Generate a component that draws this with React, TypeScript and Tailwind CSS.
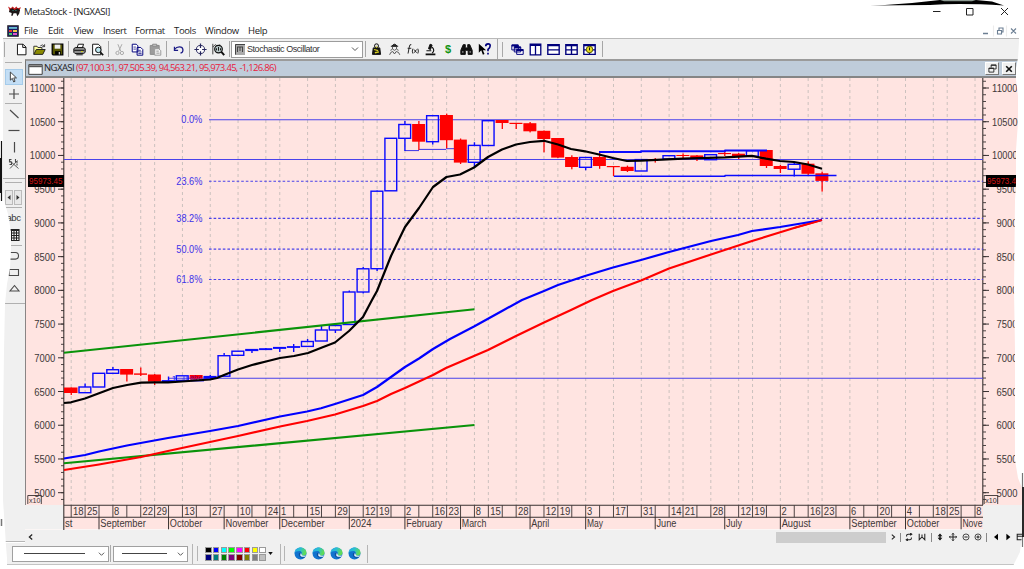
import React from "react";

const X = (i: number) => 71.2 + 13.905 * i;
const PRICE_TOP = 88;
const Y = (v: number) => PRICE_TOP + (11000 - v) * 0.06745;

// [week, colour, body top, body bottom, wick top, wick bottom]
type Candle = [number, "r" | "b", number, number, number, number];
const candles: Candle[] = [
  [0, "r", 387.5, 393, 387.5, 395], [1, "b", 387, 392.7, 383.5, 392.7], [2, "b", 373.3, 387, 373, 387],
  [3, "b", 369.7, 373.3, 367, 373], [4, "r", 369, 374.6, 369, 381.5], [5, "r", 373.4, 374.8, 367.5, 376],
  [6, "r", 374.5, 381.6, 374, 385], [7, "b", 380.8, 381.4, 376.5, 381], [8, "b", 375.8, 380.4, 375.5, 380],
  [9, "r", 375, 378.5, 375, 379], [10, "b", 376.6, 378, 375, 378], [11, "b", 355.7, 376.2, 353, 376],
  [12, "b", 351.2, 355.3, 351, 355], [13, "b", 349.6, 350.4, 349, 353], [14, "b", 348.9, 349.4, 348, 350],
  [15, "b", 347.6, 348.2, 347, 352], [16, "b", 346.8, 347.2, 344, 352], [17, "b", 341.5, 346.4, 339, 346],
  [18, "b", 330, 341, 326, 341], [19, "b", 325.5, 330, 323, 333], [20, "b", 292, 324.5, 290.5, 325],
  [21, "b", 268.8, 292, 267, 293.5], [22, "b", 191.2, 268.7, 190.5, 271], [23, "b", 138.3, 190.8, 138, 191],
  [24, "b", 124.5, 138.3, 121, 151], [25, "r", 124, 141.7, 121, 150], [26, "b", 115.7, 141.7, 115, 144.5],
  [27, "r", 115, 140.2, 113.6, 148.3], [28, "r", 139.6, 162.6, 138.5, 164], [29, "b", 145.4, 162.3, 142.3, 167],
  [30, "b", 120.7, 145.5, 120.5, 145.5], [31, "r", 120, 123, 120, 129], [32, "r", 122.8, 124, 123, 129],
  [33, "r", 123.2, 131.3, 122, 132.4], [34, "r", 130.8, 139, 130.5, 152.3], [35, "r", 138, 157.6, 138, 158],
  [36, "r", 157, 167, 155.3, 169.3], [37, "b", 157.5, 167.3, 157, 170.2], [38, "r", 157, 166, 151.8, 168.8],
  [39, "r", 166, 167.2, 166, 176], [40, "r", 166.8, 171, 165.6, 172], [41, "b", 159.6, 171, 159, 171],
  [42, "r", 159, 160, 158, 162.6], [43, "b", 155.7, 159, 155, 159], [44, "r", 155, 156, 153.4, 158],
  [45, "r", 155.4, 158.7, 155, 161], [46, "b", 154.7, 159.7, 154, 160], [47, "r", 153, 154.1, 151.5, 156],
  [48, "r", 153.7, 156.7, 153, 159], [49, "b", 150.7, 156.3, 150, 157], [50, "r", 150, 166, 150, 168],
  [51, "r", 166, 169, 165, 173], [52, "b", 164.3, 169.2, 163, 176.5], [53, "r", 163.7, 173.8, 161.3, 175],
  [54, "r", 173.3, 180.9, 171.6, 191.6],
];

const days: [number, string][] = [
  [0, "18"], [1, "25"], [3, "8"], [5, "22"], [6, "29"], [8, "13"], [10, "27"], [12, "10"], [14, "24"], [15, "1"],
  [17, "15"], [19, "29"], [21, "12"], [22, "19"], [24, "2"], [26, "16"], [27, "23"], [29, "8"], [30, "15"],
  [32, "28"], [34, "12"], [35, "19"], [37, "3"], [39, "17"], [41, "31"], [43, "14"], [44, "21"], [46, "28"],
  [48, "12"], [49, "19"], [51, "2"], [53, "16"], [54, "23"], [56, "6"], [58, "20"], [60, "4"], [62, "18"],
  [63, "25"], [65, "8"],
];
const months: [number, string, number][] = [
  [2, "September", 45.5], [7, "October", 32.5], [11, "November", 43], [15, "December", 43.5], [20, "2024", 21],
  [24, "February", 36], [28, "March", 24.5], [33, "April", 18], [37, "May", 16], [42, "June", 20],
  [47, "July", 16], [51, "August", 29], [56, "September", 45.5], [60, "October", 32.5], [64, "Nove", 20],
];

const BLACK_MA =
  "64,403 71,402.3 85,398.5 99,393.3 113,388 127,385 141,382.7 155,382.4 168,382.4 182,381.5 196,380.5 210,379.5 217,378 224,375 238,369.5 252,365 266,361.5 280,358 294,356 308,353 322,347.5 335,342.5 349,331 363,317 372,300 377,291 391,256 405,227 419,208 433,187 446.5,177 460,174.5 474,167.5 488,157 502,149.5 516,144.5 530,142 544,140.8 558,144.5 571,149 585,151.3 599,154.5 613,158 627,161 641,160.7 683,158.7 725,157.3 752,155.8 766,158.7 780,161 794,162 808,164.5 822,168.7";
const BLUE_MA =
  "64,458.5 85,455 99,451.5 127,445.5 168,438 210,431 238,426 280,416.5 307,411.5 321,408.3 335,404 363,395 377,387 391,377 405,367 419,358.5 433,349 450,339 474,326.5 502,311 522,300 544,291 558,285 585,276 613,267.5 641,260 669,252 711,241 738,235 752,231 780,227 822,220";
const RED_MA =
  "64,470 99,464.5 141,457 168,451 210,442 238,436 280,426.5 307,421 335,414.5 363,406 377,401 391,394 405,388 419,381.5 433,375 446,368 460,362 488,350 516,336 544,322.5 571,310 592,300 613,291 641,280.5 669,268.5 711,254.5 752,241 794,228 822,220";

const minorTicks: number[] = [];
for (let v = 4900; v <= 11100; v += 100) minorTicks.push(v);
const majors = [11000, 10500, 10000, 9500, 9000, 8500, 8000, 7500, 7000, 6500, 6000, 5500, 5000];
const fibs: [string, number][] = [["0.0%", 119.8], ["23.6%", 181.3], ["38.2%", 218.4], ["50.0%", 249.1], ["61.8%", 279.5]];

interface LabelProps {
  x: number;
  y: number;
  w: number;
  size?: number;
  fill?: string;
  children: React.ReactNode;
}

function Label({ x, y, w, size = 10, fill, children }: LabelProps) {
  return (
    <text x={x} y={y} textLength={w} lengthAdjust="spacingAndGlyphs" fontSize={size} fill={fill}>{children}</text>
  );
}

function PriceChart() {
  const weeks = Array.from({ length: 66 }, (_, i) => i);
  return (
    <svg viewBox="25 78 999 452" className="block h-[452px] w-[999px] shrink-0" fontFamily="'Liberation Sans', Arial, sans-serif">
      <rect x="25" y="78" width="999" height="452" fill="#ffe4e1" />
      <rect x="25" y="505" width="39" height="25" fill="#f0f0f0" />
      <rect x="983" y="505" width="41" height="25" fill="#f0f0f0" />
      <rect x="25" y="529" width="958" height="1" fill="#fbf6f5" />
      <path d="M25.5 78V505" stroke="#8a8585" />
      {days.map(([i]) => (
        <path key={i} d={`M${X(i)} 78V505`} stroke="#cbc1be" strokeWidth="1" strokeDasharray="3 3" />
      ))}
      <path d="M63.8 78V530M982.8 78V505M64 505.3H983M64 517.3H983" stroke="#3a3232" strokeWidth="1.1" />
      {minorTicks.map((v) => (
        <path key={v} d={`M61 ${Y(v)}h3M983 ${Y(v)}h3`} stroke="#3a3232" strokeWidth="0.9" />
      ))}
      {majors.map((v) => {
        const w = v >= 10000 ? 25.5 : 21;
        return (
          <g key={v} fill="#403838">
            <path d={`M58 ${Y(v)}h6M983 ${Y(v)}h6`} stroke="#3a3232" />
            <Label x={55.3 - w} y={Y(v) + 4} w={w}>{v}</Label>
            <Label x={1017.6 - w} y={Y(v) + 4} w={w}>{v}</Label>
          </g>
        );
      })}
      <rect x="28" y="175" width="36" height="12" fill="#000" />
      <Label x={29} y={184.3} w={33.5} size={9.5} fill="#d01515">95973.45</Label>
      <rect x="986" y="175" width="38" height="12" fill="#000" />
      <Label x={987} y={184.3} w={33.5} size={9.5} fill="#d01515">95973.45</Label>
      <path d="M27.8 504V495.5H41.3V504M984.2 504V495.5H997.7V504" stroke="#3a3232" fill="none" strokeWidth="0.9" />
      <g fill="#403838">
        <Label x={29} y={503} w={11.5} size={8}>x10</Label>
        <Label x={985.3} y={503} w={11.5} size={8}>x10</Label>
      </g>

      {weeks.map((i) => (
        <path key={i} d={`M${X(i)} 505.3v12`} stroke="#3a3232" strokeWidth="0.9" />
      ))}
      <g fill="#403838">
        {days.map(([i, d]) => (
          <Label key={i} x={X(i) + (d.length > 1 ? 1.8 : 1.2)} y={514.8} w={d.length > 1 ? 10.6 : 5.2}>{d}</Label>
        ))}
        <Label x={65} y={526.8} w={7.5}>st</Label>
        {months.map(([i, m, w]) => (
          <g key={i}>
            <path d={`M${X(i)} 517v12.3`} stroke="#3a3232" />
            <Label x={X(i) + 1.3} y={526.8} w={w}>{m}</Label>
          </g>
        ))}
      </g>

      <g stroke="#4a42ea" strokeWidth="1.1" fill="none">
        <path d="M209 119.8H983M64 159.5H983M168 378.3H983" />
        {fibs.slice(1).map(([l, y]) => (
          <path key={l} d={`M209 ${y}H983`} strokeDasharray="2.6 2" />
        ))}
      </g>
      <g fill="#3c32e8">
        {fibs.map(([l, y]) => {
          const w = l.length > 4 ? 26 : 21;
          return <Label key={l} x={202.3 - w} y={y + 3.6} w={w}>{l}</Label>;
        })}
      </g>

      <path d="M405 150.6H419M419 149.4H446M446 148.7H460" stroke="#3a32e8" />
      {candles.map(([i, c, t, b, wt, wb]) => {
        const cx = X(i);
        const left = i === 0 ? 64 : cx - 6.7;
        return c === "r" ? (
          <g key={i} fill="#ff0000">
            <rect x={cx - 0.6} y={wt} width="1.3" height={wb - wt} />
            <rect x={left} y={t} width={cx + 6.3 - left} height={b - t} />
          </g>
        ) : (
          <g key={i} stroke="#0a0aff" strokeWidth="1.4" fill="none">
            <path d={`M${cx} ${wt}V${t}M${cx} ${b}V${wb}`} />
            <rect x={cx - 6.1} y={t} width="11.8" height={b - t} />
          </g>
        );
      })}
      <g fontWeight="bold">
        <Label x={172} y={380.5} w={4} size={7} fill="#3030ff">1</Label>
        <Label x={190} y={379.5} w={12} size={7} fill="#a00060">abc</Label>
        <path d="M184 375.5v5M187 375.5v5M191 381H204" stroke="#3030ff" strokeWidth="0.9" />
      </g>
      <g fill="none" strokeLinejoin="round">
        <path d="M64 352.8L474.5 309.3M64 463.3L474.5 425" stroke="#0a930a" strokeWidth="2.1" />
        <polyline points={RED_MA} stroke="#ff0000" strokeWidth="2.2" />
        <polyline points={BLUE_MA} stroke="#0000ff" strokeWidth="2.2" />
        <path d="M794 228L822 220" stroke="#ff0000" strokeWidth="1.7" />
        <path d="M599 152H641V151.2H725V150.4H767" stroke="#0a0aff" strokeWidth="2" />
        <path d="M614 176.3H725V175.5H836.5" stroke="#0a0aff" strokeWidth="1.5" />
        <polyline points={BLACK_MA} stroke="#000" strokeWidth="2.2" />
      </g>
    </svg>
  );
}

function Icon({ children, cls = "w-[18px]" }: { children: React.ReactNode; cls?: string }) {
  return (
    <div className={`flex h-full shrink-0 items-center justify-center ${cls}`}>
      <svg viewBox="0 0 16 16" className="h-[13px] w-[13px]" fill="none" stroke="#111" strokeWidth="1.2">{children}</svg>
    </div>
  );
}

function Sep({ cls = "w-1" }: { cls?: string }) {
  return (
    <div className={`flex h-full shrink-0 justify-center py-[2px] ${cls}`}>
      <div className="w-px bg-[#a6a6a6]" />
    </div>
  );
}

const NAVY = "#00007c";

function MainToolbar() {
  return (
    <div className="flex h-[21px] shrink-0 items-center border-t border-[#b9b9b9] bg-[#f0f0f0] pl-[4px]">
      <div className="mr-[7px] h-[15px] w-px bg-[#a8a8a8]" />
      <Icon><path d="M3 1.500h7l3.500 3.500V14.500H3zM9.500 1.500v4h4" fill="#fff" /></Icon>
      <Icon>
        <path d="M1 14V4h4l1 1.500h5V8" fill="#ffff9a" stroke="#333" />
        <path d="M1 14L4 8H15L12 14Z" fill="#8a8a00" stroke="#222" />
        <path d="M9 3.500q3-2.500 5 .5M14.300 1.500v3h-3" strokeWidth="0.900" />
      </Icon>
      <Icon>
        <path d="M1.500 1.500h13v13h-12l-1-1z" fill="#555500" stroke="#000" strokeWidth="1.600" />
        <path d="M4.500 2h7v5h-7z" fill="#f0f0f0" stroke="none" />
        <path d="M5 10h7v4.500H5z" fill="#000" stroke="none" />
        <path d="M9.500 11h1.500v3h-1.500z" fill="#ddd" stroke="none" />
      </Icon>
      <Sep />
      <Icon>
        <path d="M5 6L6.500 1.500H13L11.500 6" fill="#fff" />
        <path d="M1 7l2-1.500h10L15 7v4.500l-2 1.500H2.500L1 11.500z" fill="#8e8e8e" stroke="#111" />
        <path d="M1.500 9H14M4 14.500h8" /><path d="M10 10.500h2" stroke="#e0e000" />
      </Icon>
      <Icon>
        <path d="M2 1.500h7l3 3v10H2z" fill="#fff" />
        <circle cx="9" cy="8.500" r="3.400" fill="#bde6ee" /><path d="M11.500 11.500L15 15" strokeWidth="2" />
      </Icon>
      <Sep />
      <Icon><g stroke="#a9a9a9"><path d="M6 1.500L9.500 10M11 1.500L7 10" /><circle cx="5.500" cy="12.300" r="2" /><circle cx="11" cy="12.300" r="2" /></g></Icon>
      <Icon>
        <g stroke={NAVY} fill="#fff"><path d="M1.500 1.500h5l2 2V11h-7zM7.500 5.500h4.500l2.500 2.500v7h-7z" /><path d="M3 5h3M3 7.500h3M9 9h3M9 11h4M9 13h4" strokeWidth="0.900" /></g>
      </Icon>
      <Icon>
        <path d="M1.500 3h11v11h-11z" fill="#9c9c9c" stroke="#8a8a8a" /><path d="M4.500 1.500h5V4h-5z" fill="#ccc" stroke="#8a8a8a" />
        <path d="M7 7h5l2.500 2.500V15H7zM9 10h3M9 12.500h4" fill="#f4f4f4" stroke="#999" />
      </Icon>
      <Sep />
      <Icon cls="w-5"><path d="M3 8C6 4 13 3.500 13.500 8.500C13.500 11 12 12 10.500 12.500M3 4.500V9h4.500" stroke="#1b1b86" strokeWidth="1.500" /></Icon>
      <Sep cls="w-[3px]" />
      <Icon><g stroke="#26265e"><circle cx="8" cy="8" r="5" fill="#fff" /><path d="M8 0.500V6M8 10v5.500M0.500 8H6M10 8h5.500" strokeWidth="1.500" /></g></Icon>
      <Icon>
        <path d="M1 14V1M1 5l3-3 3 2 3-2" stroke="#444" /><circle cx="8" cy="7.500" r="4.700" fill="#b8c8c8" strokeWidth="1.500" />
        <path d="M5.500 9V6.500M8 9.500V5M10.500 9V6.500" /><path d="M11.500 11L15 15" strokeWidth="2.400" />
      </Icon>
      <Sep />
      <div className="flex h-[17px] w-[132px] shrink-0 items-center border border-[#9c9c9c] bg-white pl-[3px] pr-[3px]">
        <svg viewBox="0 0 10 11" className="h-[11px] w-[10px] shrink-0"><rect width="10" height="11" fill="#aaa" /><path d="M.5 10.500V.5H10M2 3h6M2.500 3v5M5 3v4M7.500 3v5" stroke="#444" fill="none" /></svg>
        <span className="ml-[2px] flex-1 whitespace-nowrap font-['Liberation_Sans',Arial,sans-serif] text-[9px] leading-none tracking-[-0.440px] text-[#333]">Stochastic Oscillator</span>
        <svg viewBox="0 0 8 6" className="h-[6px] w-[8px]"><path d="M1 1.500L4 4.500 7 1.500" fill="none" stroke="#555" /></svg>
      </div>
      <Sep />
      <Icon>
        <circle cx="8" cy="3.500" r="2.500" fill="#ddd" /><path d="M4 6h8l1 8H3z" fill="#151515" /><path d="M5 8l5 1.500M6 12l5-1M7 5h2" stroke="#d8d020" strokeWidth="1.600" />
      </Icon>
      <Icon>
        <path d="M5 3.500q3-4 6 0zM3.500 4H12.500" fill="#333" /><path d="M5.500 5v2.500q2.500 3 5 0V5M2 14.500q1-4 4-4l2 3 2-3q3.500 0 4.500 4M3 9l2-1M13 9l-2-1" stroke="#555" />
      </Icon>
      <Icon><path d="M6.500 2Q4.500 1 4 5L2.500 13M2 6.500h4.500M8.500 7q-1.500 3 0 6M14.500 7q1.500 3 0 6M10 8l3 4M13 8l-3 4" stroke="#222" /></Icon>
      <Icon><path d="M7.500 1.500L10 2.500 8 8 5.500 7z" fill="#111" /><path d="M10 5q4 4 0 7.500M3 9.500h6" strokeWidth="1.400" /><path d="M2 14h12" strokeWidth="2.200" /></Icon>
      <div className="flex w-[18px] shrink-0 justify-center font-['Liberation_Sans',Arial,sans-serif] text-[11px] font-bold leading-none text-[#129412]">$</div>
      <Icon><path d="M4 2h2.500v4h3V2H12l3 7v5h-5V9H6.500v5H1V9z" fill="#111" /><path d="M3.500 10v2M12.500 10v2" stroke="#bbb" /></Icon>
      <Icon><path d="M1 1v11l3-3 2 5.500 2-1-2-4.500h4z" fill="#000" stroke="none" /><path d="M9.500 4q0-3 3-3 2.500 0 2.500 2.500Q15 6 12.300 8v2M12.300 12v2" stroke={NAVY} strokeWidth="2" /></Icon>
      <div className="ml-[4px] h-full w-px bg-[#a8a8a8]" />
      <div className="ml-[4px] mr-[5px] h-[15px] w-px bg-[#a8a8a8]" />
      <Icon><g stroke={NAVY} fill="#fff"><path d="M1 2.500h8v6H1zM4 5h8v6H4zM7 8h8v6H7z" /><path d="M1 3h8M4 5.500h8M7 8.500h8" strokeWidth="2.500" /></g></Icon>
      <Icon><path d="M1.500 1.500h13v13h-13zM8 2v12M1.500 3h13" stroke={NAVY} strokeWidth="1.600" fill="#fff" /></Icon>
      <Icon><path d="M1 2h14v12H1zM1 8.500h14M1 3h14" stroke={NAVY} strokeWidth="1.700" fill="#fff" /></Icon>
      <Icon><path d="M1 2h14v12H1zM1 8.500h14M1 3h14M8 2v12" stroke={NAVY} strokeWidth="1.700" fill="#fff" /></Icon>
      <Icon><path d="M1 2h14v12H1zM1 8.500h14M1 3h14M8 2v12" stroke={NAVY} strokeWidth="1.700" fill="#fff" /><circle cx="8" cy="8" r="4" fill="#e6dc20" stroke="#555500" /><path d="M8 5.500V9" /></Icon>
      <Sep cls="w-2" />
    </div>
  );
}

function Side({ children, cls }: { children: React.ReactNode; cls: string }) {
  return (
    <div className={`flex w-full shrink-0 items-center justify-center ${cls}`}>
      <svg viewBox="0 0 14 14" className="h-[14px] w-[14px]" fill="none" stroke="#4a4a4a" strokeWidth="1.100">{children}</svg>
    </div>
  );
}

function SideRule() {
  return <div className="h-px w-[17px] shrink-0 bg-[#b0b0b0]" />;
}

function SideToolbar() {
  return (
    <div className="flex h-[483px] w-[25px] shrink-0 flex-col items-center border-b border-[#b5b5b5] bg-[#f0f0f0] pl-[2px] pt-[3px]">
      <SideRule />
      <div className="mt-[6px] flex h-[16px] w-[18px] shrink-0 items-center justify-center border border-[#a5cbea] bg-[#c3def5]">
        <svg viewBox="0 0 10 13" className="h-[12px] w-[9px]"><path d="M1.500 1v9l2.200-2 1.500 4 1.500-.7L5.300 7.500h3z" fill="#fff" stroke="#333" /></svg>
      </div>
      <Side cls="h-[18px]"><path d="M7 2v10M2 7h10" strokeWidth="1.200" /></Side>
      <SideRule />
      <Side cls="h-[20px]"><path d="M3 3l8.500 8" /></Side>
      <Side cls="h-[14px]"><path d="M1.500 6.500h11" strokeWidth="1.200" /></Side>
      <Side cls="h-[17px]"><path d="M7.500 2v10.500" strokeWidth="1.200" /></Side>
      <Side cls="h-[18px]"><path d="M2.500 3.500l9 8M3 11.500l7.500-8" strokeWidth="0.900" /><path d="M4.500 2.500H2.500V5h2v2.500h-2M8.500 2v3h2.500M10 6.500v2" strokeWidth="1.100" /></Side>
      <div className="mt-[5px] h-px w-full shrink-0 bg-[#b0b0b0]" />
      <div className="mt-[3px] h-px w-[17px] shrink-0 bg-[#b0b0b0]" />
      <div className="mt-[7px] flex h-[15px] w-[17px] shrink-0 gap-px">
        <div className="flex flex-1 items-center justify-center border border-[#bbb] bg-[#e8e8e8]"><svg viewBox="0 0 4 5" className="h-[5px] w-[4px]"><path d="M3.500 0L0.500 2.500 3.500 5z" fill="#333" /></svg></div>
        <div className="flex flex-1 items-center justify-center border border-[#bbb] bg-[#e8e8e8]"><svg viewBox="0 0 4 5" className="h-[5px] w-[4px]"><path d="M.5 0L3.500 2.500 .5 5z" fill="#333" /></svg></div>
      </div>
      <div className="mt-[2px] h-px w-[17px] shrink-0 bg-[#b0b0b0]" />
      <div className="flex h-[20px] shrink-0 items-center font-['Liberation_Sans',Arial,sans-serif] text-[9.500px] leading-none tracking-[-0.500px] text-[#333]">abc</div>
      <Side cls="h-[14px]"><path d="M2 1.500h10v11H2z" fill="#fff" stroke="#222" /><path d="M2 2.500h10M2 5h10M2 7.500h10M2 10h10M4.500 2v11M7 2v11M9.500 2v11" stroke="#222" /></Side>
      <div className="mt-[3px] h-px w-[17px] shrink-0 bg-[#b0b0b0]" />
      <Side cls="h-[20px]"><path d="M3 3.500h5.500q3 0 3 3.300t-3 3.300H3" /></Side>
      <Side cls="h-[14px]"><path d="M2 3.500h9.500v6H2z" /></Side>
      <Side cls="h-[18px]"><path d="M7.500 3.500l4.500 5.500H3z" /></Side>
      <div className="mt-[5px] h-px w-full shrink-0 bg-[#b0b0b0]" />
    </div>
  );
}

function Tiny({ children, cls }: { children: React.ReactNode; cls: string }) {
  return (
    <div className={`flex shrink-0 items-center justify-center ${cls}`}>
      <svg viewBox="0 0 10 10" className="h-[8px] w-[8px]" fill="none" stroke="#222" strokeWidth="1.300">{children}</svg>
    </div>
  );
}

function ScrollRow() {
  return (
    <div className="flex h-[14px] shrink-0 items-center bg-[#f0f0f0] pl-px">
      <Tiny cls="w-[10px]"><path d="M6.500 2L3 5l3.500 3" strokeWidth="1.600" /></Tiny>
      <div className="ml-[740px] h-[11px] w-[110px] shrink-0 bg-[#cdcdcd]" />
      <Tiny cls="w-[14px]"><path d="M3.500 2L7 5 3.500 8" /></Tiny>
      <div className="h-[9px] w-px shrink-0 bg-[#888]" />
      <Tiny cls="ml-[2px] w-[12px]"><path d="M8 1.500H4Q2 1.500 2 3.500V4.500M2 8.500h4q2 0 2-2V5.500M6.500 0L8.500 1.500 6.500 3M3.500 7L1.500 8.500 3.500 10" /></Tiny>
      <Tiny cls="w-[13px]"><path d="M1.500 1v7.500L5 5l3.500 3.500V1M5 2v3" /></Tiny>
      <div className="ml-[3px] h-[9px] w-px shrink-0 bg-[#888]" />
      <Tiny cls="ml-[2px] w-[12px]"><path d="M5 .5L8 4H2zM5 9.500L8 6H2z" fill="#111" stroke="none" /><path d="M5 2v6" strokeWidth="2" /></Tiny>
      <Tiny cls="w-[13px]"><path d="M5 0v10M0 5h10" /><path d="M3.500 2L5 .5 6.500 2M3.500 8L5 9.500 6.500 8M2 3.500L.5 5 2 6.500M8 3.500L9.500 5 8 6.500" strokeWidth="0.900" /></Tiny>
      <Tiny cls="w-[13px]"><circle cx="5" cy="5" r="3.800" strokeWidth="1" /><path d="M3 5h4" /></Tiny>
      <Tiny cls="w-[12px]"><circle cx="5" cy="5" r="3.800" strokeWidth="1" /><path d="M3 5h4M5 3v4" /></Tiny>
      <div className="ml-[2px] h-[9px] w-px shrink-0 bg-[#888]" />
      <Tiny cls="ml-[2px] w-[13px]"><path d="M7.500 1v8L2.500 5z" fill="#000" stroke="none" /></Tiny>
      <Tiny cls="w-[12px]"><path d="M3 1v8l5-4z" fill="#000" stroke="none" /></Tiny>
      <Tiny cls="w-[12px]"><path d="M1.500 1.500h8v7h-8zM1.500 4h8" /></Tiny>
    </div>
  );
}

const swatches = [
  "bg-black", "bg-[#0000ff]", "bg-[#00ffff]", "bg-[#00ff00]", "bg-[#ff00ff]", "bg-[#ff0000]", "bg-[#ffff00]", "bg-white",
  "bg-[#000080]", "bg-[#008080]", "bg-[#008000]", "bg-[#800080]", "bg-[#800000]", "bg-[#808000]", "bg-[#808080]", "bg-[#c0c0c0]",
];

function LineCombo({ cls, line }: { cls: string; line: string }) {
  return (
    <div className={`flex h-[16px] shrink-0 items-center justify-between border border-[#a0a0a0] bg-white pr-[3px] ${cls}`}>
      <div className={`h-px bg-[#444] ${line}`} />
      <svg viewBox="0 0 8 6" className="h-[6px] w-[7px]"><path d="M1 1.500L4 4.500 7 1.500" fill="none" stroke="#555" strokeWidth="1.100" /></svg>
    </div>
  );
}

function EdgeIcon() {
  return (
    <svg viewBox="0 0 24 24" className="h-[13px] w-[13px] shrink-0">
      <defs>
        <linearGradient id="edgeTop" x1="0" y1="0" x2="1" y2="0.300"><stop offset="0" stopColor="#27a9e8" /><stop offset="0.500" stopColor="#28bfd0" /><stop offset="1" stopColor="#62dc52" /></linearGradient>
      </defs>
      <circle cx="12" cy="12" r="11" fill="#1173cf" />
      <path d="M1 12C1 5 6 1 12 1c7 0 11 5 11 9.500 0 4-3 5.500-6 5.500-2.500 0-3.500-1-3-2 2-3-.5-6.500-4-6.500C5 7.500 2 9 1 12z" fill="url(#edgeTop)" />
      <path d="M9 12c-1 5 3 8.500 8 8 2-.3 3.500-1.500 4.500-3-3 1.500-9 1.500-9-3 1-1.500.5-3-.5-3.500-1.500 0-2.500.5-3 1.500z" fill="#0c4f9f" />
      <path d="M12 11.500q3 0 2 3 2 2.500 8 1l-1 2.500q-9 1-9.500-3z" fill="#e8f5fb" />
    </svg>
  );
}

function BottomToolbar() {
  return (
    <div className="flex h-[22px] shrink-0 items-center border-b border-[#c4c4c4] bg-[#f0f0f0] pl-[5px]">
      <div className="mr-[6px] h-[11px] w-px bg-[#bbb]" />
      <LineCombo cls="w-[97px] pl-[11px]" line="w-[61px]" />
      <div className="ml-px h-[17px] w-px bg-[#aaa]" />
      <LineCombo cls="ml-[2px] w-[75px] pl-[8px]" line="w-[45px]" />
      <div className="ml-[4px] h-[20px] w-px bg-[#b5b5b5]" />
      <div className="ml-[4px] h-[15px] w-px bg-[#b5b5b5]" />
      <div className="ml-[7px] grid w-[61px] grid-cols-8 gap-x-[1px] gap-y-[1px]">
        {swatches.map((s) => (
          <div key={s} className={`h-[6.500px] w-[6.600px] border border-[#9a9a9a] ${s}`} />
        ))}
      </div>
      <svg viewBox="0 0 6 4" className="ml-[2px] h-[3px] w-[5px]"><path d="M0 0h6L3 4z" fill="#111" /></svg>
      <div className="ml-[7px] h-[20px] w-px bg-[#b5b5b5]" />
      <div className="ml-[3px] h-[15px] w-px bg-[#b5b5b5]" />
      <div className="ml-[9px] flex gap-[5px]">
        <EdgeIcon /><EdgeIcon /><EdgeIcon /><EdgeIcon />
      </div>
      <div className="ml-[6px] h-[18px] w-px bg-[#b5b5b5]" />
    </div>
  );
}

function PaperEdges() {
  return (
    <svg viewBox="0 0 1024 569" className="pointer-events-none absolute inset-0 h-[569px] w-[1024px]">
      <g fill="#fff">
        <path d="M0 0H3L3 60 3 190 5 204 8 214 11 232 11 250 10 268 7 284 5 304 4 350 3 430 3 500 5 530 6 546 7 558 7 569H0z" />
        <path d="M1024 0H1022L1019 22 1019 42 1018 58 1016 68 1016 80 1018 96 1018 122 1016 150 1016 184 1015 200 1014 290 1015 350 1015 460 1018 478 1022 488 1022 536 1020 552 1014 564 1012 569H1024z" />
      </g>
      <path d="M870 5.500L885 5 912 3 940 0H976L992 1.500 1004 5.500Q960 3 930 5z" fill="#000" />
      <path d="M940 0H976L972 1.200H944z" fill="#8d9a92" />
      <path d="M1.500 141V201M0.500 158V193" stroke="#111" strokeWidth="1.200" />
      <path d="M1.500 519v7" stroke="#777" strokeWidth="1.500" />
      <path d="M1022.500 473V487M1022.500 536v11" stroke="#777" strokeWidth="1.200" />
      <path d="M1023 487V537" stroke="#111" strokeWidth="1.800" />
    </svg>
  );
}

const menus: [string, string][] = [
  ["File", "w-[24px]"], ["Edit", "w-[26px]"], ["View", "w-[29px]"], ["Insert", "w-[32px]"],
  ["Format", "w-[39px]"], ["Tools", "w-[31px]"], ["Window", "w-[43px]"], ["Help", "w-[24px]"],
];

export default function App() {
  return (
    <div className="relative flex h-[569px] w-[1024px] flex-col overflow-hidden bg-white font-['Open_Sans','Noto_Sans',sans-serif] text-[#222]">
      <div className="flex h-[23px] shrink-0 items-center pl-[8px]">
        <svg viewBox="0 0 14 11" className="h-[11px] w-[13px]">
          <path d="M0 0l3 2 2-2 2 2 2-2 1.500 2L14 1 12 5H2z" fill="#c51f1f" />
          <path d="M2 3l3-1 2 2 3-2 3 2-1 4-2 2.500-1-3H6L5 10 3.500 10 4 7 1 6z" fill="#1c1717" />
          <path d="M5 4l1 1M9 4L8 5" stroke="#3a9" />
        </svg>
        <span className="ml-[3px] mt-px text-[9.500px] leading-none tracking-[-0.400px]">MetaStock - [NGXASI]</span>
        <svg viewBox="0 0 80 12" className="ml-auto mr-[13px] h-[12px] w-[80px]" fill="none" stroke="#222">
          <path d="M2 5.500h7.500M35.500 2.500h6.500v6.500h-6.500zM70 2l7 7M77 2l-7 7" />
        </svg>
      </div>
      <div className="flex h-[15px] shrink-0 items-center pl-[7px] text-[9.500px] leading-none tracking-[-0.350px]">
        <svg viewBox="0 0 12 12" className="mr-[5px] h-[12px] w-[12px] shrink-0">
          <rect x=".7" y=".7" width="10.600" height="10.600" fill="#1c1c66" stroke="#333" />
          <path d="M2 2.200h8v1.500H2z" fill="#7ae4ea" /><path d="M2 5h3v2H2z" fill="#e33" /><path d="M6 5h4v2H6z" fill="#ec4" /><path d="M2 8h3v2H2z" fill="#4c6" /><path d="M6 8h4v2H6z" fill="#d5c" />
        </svg>
        {menus.map(([m, w]) => (
          <span key={m} className={`shrink-0 whitespace-nowrap ${w}`}>{m}</span>
        ))}
        <svg viewBox="0 0 40 12" className="ml-auto mr-[4px] h-[12px] w-[40px]" fill="none" stroke="#6c7f93" strokeWidth="1.100">
          <path d="M13.500 .5v11M26.500 .5v11" stroke="#ececec" />
          <path d="M3 8.500h5" strokeWidth="1.500" /><path d="M17.500 5.500h4v3.500h-4zM19 5V3h4v4h-1.500M31 3.500l5 5M36 3.500l-5 5" />
        </svg>
      </div>
      <MainToolbar />
      <div className="flex h-[484px] shrink-0">
        <SideToolbar />
        <div className="flex w-[999px] shrink-0 flex-col">
          <div className="flex h-[19px] shrink-0 items-center border-b-2 border-l border-t-2 border-b-[#858585] border-l-[#777] border-t-[#9b9b9b] bg-[#bfccda] pl-[2px]">
            <svg viewBox="0 0 16 12" className="mt-[2px] h-[11px] w-[15px]"><path d="M.7 .7h14.600v10.600H.7z" fill="#fff" stroke="#333" /><path d="M1 1.500h14v2H1z" fill="#555" /></svg>
            <span className="-mt-[2px] ml-[1px] whitespace-nowrap text-[9.500px] leading-none tracking-[-0.550px]">
              NGXASI <span className="tracking-[-0.690px] text-[#e8203a]">(97,100.31, 97,505.39, 94,563.21, 95,973.45, -1,126.86)</span>
            </span>
            <div className="ml-auto mr-[8px] flex gap-[3px]">
              <div className="flex h-[13px] w-[14px] items-center justify-center border border-[#777] border-l-white border-t-white bg-[#f0f0f0]">
                <svg viewBox="0 0 10 10" className="h-[9px] w-[9px]" fill="none" stroke="#222"><path d="M1 4.500h5.500V9H1zM1 5h5.500M3.500 4V1H9v4.500H7M3.500 1.500H9" /></svg>
              </div>
              <div className="flex h-[13px] w-[14px] items-center justify-center border border-[#777] border-l-white border-t-white bg-[#f0f0f0]">
                <svg viewBox="0 0 10 10" className="h-[8px] w-[8px]" stroke="#111" strokeWidth="2"><path d="M1.500 1.500l7 7M8.500 1.500l-7 7" /></svg>
              </div>
            </div>
          </div>
          <PriceChart />
          <ScrollRow />
        </div>
      </div>
      <BottomToolbar />
      <PaperEdges />
    </div>
  );
}
